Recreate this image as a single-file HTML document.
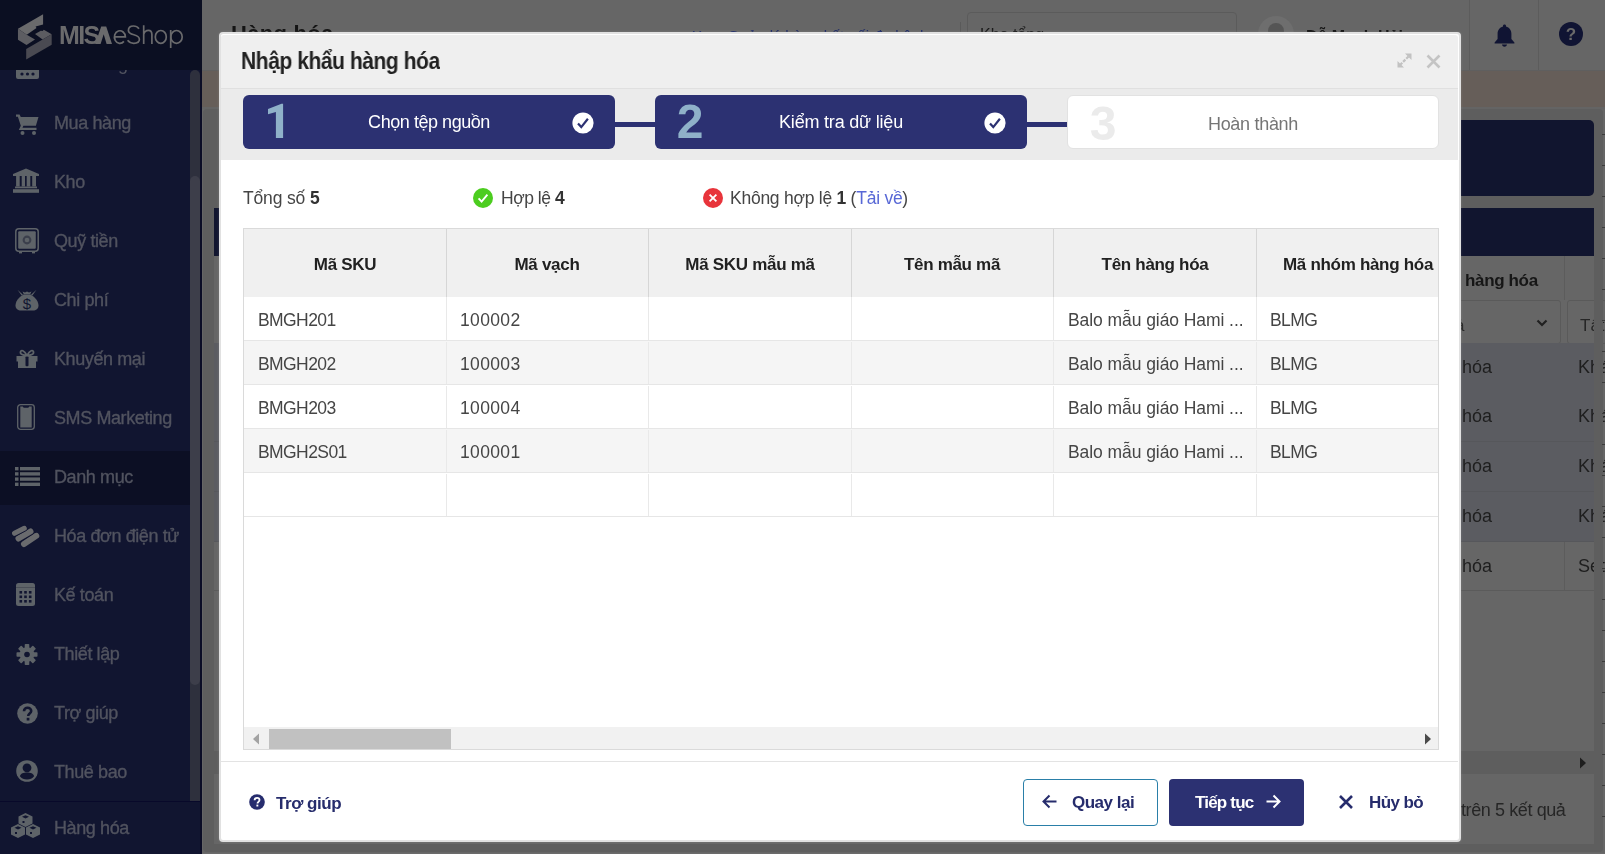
<!DOCTYPE html>
<html><head><meta charset="utf-8">
<style>
*{box-sizing:border-box;margin:0;padding:0}
html,body{width:1605px;height:854px;overflow:hidden;background:#666;font-family:"Liberation Sans",sans-serif;-webkit-font-smoothing:antialiased}
.a{position:absolute}
.t{position:absolute;white-space:nowrap;line-height:1;will-change:transform}
svg{overflow:visible}
</style></head><body>

<div class="a" style="left:202px;top:0px;width:1403px;height:70px;background:#666;"></div>
<div class="t" style="left:231px;top:22.98px;font-size:22px;color:#141414;font-weight:700;letter-spacing:0.3px;">Hàng hóa</div>
<div class="t" style="left:692px;top:28.30px;font-size:15px;color:#1d2a66;letter-spacing:0.2px;">Xem Quản lý hàng kết nối đa kênh</div>
<div class="a" style="left:960px;top:22px;width:1px;height:30px;background:#5a5a5a;"></div>
<div class="a" style="left:967px;top:12px;width:270px;height:46px;border:1px solid #5b5b5b;border-radius:4px"></div>
<div class="t" style="left:980px;top:27.06px;font-size:16px;color:#1a1a1a;">Kho tổng</div>
<div class="a" style="left:1258px;top:16px;width:36px;height:36px;border-radius:50%;background:#6e6e6e"></div>
<div class="a" style="left:1268px;top:23px;width:16px;height:16px;border-radius:50%;background:#555"></div>
<div class="t" style="left:1306px;top:29.46px;font-size:16px;color:#141414;font-weight:700;">Đỗ Mạnh Hải</div>
<div class="a" style="left:1469px;top:0px;width:1px;height:70px;background:#5c5c5c;"></div>
<div class="a" style="left:1538px;top:0px;width:1px;height:70px;background:#5c5c5c;"></div>
<svg class="a" style="left:1493px;top:22px" width="23" height="26" viewBox="0 0 23 26"><path d="M11.5 2.5c-.9 0-1.5.6-1.5 1.4v.6C6.6 5.4 4.6 8.3 4.6 11.7v5.4L1.6 20.6v.9h19.8v-.9l-3-3.5v-5.4c0-3.4-2-6.3-5.4-7.2v-.6c0-.8-.6-1.4-1.5-1.4zM9 22.5c0 1.2 1.1 2.3 2.5 2.3S14 23.7 14 22.5z" fill="#101433"/></svg>
<div class="a" style="left:1559px;top:22px;width:24px;height:24px;border-radius:50%;background:#101433"></div>
<div class="t" style="left:1271px;width:600px;text-align:center;top:26.11px;font-size:17px;color:#6a6a6a;font-weight:700;">?</div>
<div class="a" style="left:202px;top:70px;width:1403px;height:1px;background:#5f5f5f;"></div>
<div class="a" style="left:202px;top:71px;width:1403px;height:36px;background:#665e59;"></div>
<div class="a" style="left:202px;top:107px;width:1403px;height:2px;background:#646464;"></div>
<div class="a" style="left:202px;top:109px;width:1403px;height:745px;background:#666;"></div>
<div class="a" style="left:203px;top:109px;width:1400px;height:743px;background:#5e5e5e;border-radius:4px"></div>
<div class="a" style="left:214px;top:208px;width:1380px;height:636px;background:#666;"></div>
<div class="a" style="left:240px;top:120px;width:1354px;height:76px;background:#11152f;border-radius:5px"></div>
<div class="a" style="left:214px;top:208px;width:1380px;height:48px;background:#11152f;"></div>
<div class="t" style="left:1465px;top:271.81px;font-size:17px;color:#161616;font-weight:700;letter-spacing:-0.35px;">hàng hóa</div>
<div class="a" style="left:1564px;top:256px;width:1px;height:44px;background:#5c5c5c;"></div>
<div class="a" style="left:1300px;top:300px;width:261px;height:44px;border:1px solid #5a5a5a;border-radius:3px"></div>
<svg class="a" style="left:1536px;top:319px" width="12" height="8" viewBox="0 0 12 8"><path d="M1.5 1.5L6 6l4.5-4.5" stroke="#202020" stroke-width="2.2" fill="none"/></svg>
<div class="a" style="left:1567px;top:300px;width:40px;height:44px;border:1px solid #5a5a5a;border-radius:3px"></div>
<div class="t" style="left:1580px;top:316.61px;font-size:17px;color:#262626;">Tất cả</div>
<div class="t" style="left:1455px;top:316.61px;font-size:17px;color:#262626;">ả</div>
<div class="a" style="left:214px;top:343px;width:1380px;height:50px;background:#5b5c61;"></div>
<div class="t" style="left:1462px;top:357.76px;font-size:18px;color:#1e1e1e;">hóa</div>
<div class="t" style="left:1578px;top:357.76px;font-size:18px;color:#1e1e1e;">Khác</div>
<div class="a" style="left:214px;top:392px;width:1380px;height:1px;background:#56575b;"></div>
<div class="a" style="left:214px;top:392px;width:1380px;height:50px;background:#5b5c61;"></div>
<div class="t" style="left:1462px;top:406.76px;font-size:18px;color:#1e1e1e;">hóa</div>
<div class="t" style="left:1578px;top:406.76px;font-size:18px;color:#1e1e1e;">Khác</div>
<div class="a" style="left:214px;top:441px;width:1380px;height:1px;background:#56575b;"></div>
<div class="a" style="left:214px;top:442px;width:1380px;height:50px;background:#5b5c61;"></div>
<div class="t" style="left:1462px;top:456.76px;font-size:18px;color:#1e1e1e;">hóa</div>
<div class="t" style="left:1578px;top:456.76px;font-size:18px;color:#1e1e1e;">Khác</div>
<div class="a" style="left:214px;top:491px;width:1380px;height:1px;background:#56575b;"></div>
<div class="a" style="left:214px;top:492px;width:1380px;height:50px;background:#5b5c61;"></div>
<div class="t" style="left:1462px;top:506.76px;font-size:18px;color:#1e1e1e;">hóa</div>
<div class="t" style="left:1578px;top:506.76px;font-size:18px;color:#1e1e1e;">Khác</div>
<div class="a" style="left:214px;top:541px;width:1380px;height:1px;background:#56575b;"></div>
<div class="t" style="left:1462px;top:556.76px;font-size:18px;color:#1e1e1e;">hóa</div>
<div class="t" style="left:1578px;top:556.76px;font-size:18px;color:#1e1e1e;">Set</div>
<div class="a" style="left:1564px;top:542px;width:1px;height:48px;background:#5c5c5c;"></div>
<div class="a" style="left:214px;top:590px;width:1380px;height:1px;background:#5b5b5b;"></div>
<div class="a" style="left:214px;top:751px;width:1380px;height:23px;background:#5e5e5e;"></div>
<svg class="a" style="left:1579px;top:757px" width="8" height="12" viewBox="0 0 8 12"><path d="M1 0.5L7 6 1 11.5z" fill="#1e1e1e"/></svg>
<div class="t" style="left:1460.5px;top:800.76px;font-size:18px;color:#262626;letter-spacing:-0.4px;">trên 5 kết quả</div>
<div class="a" style="left:1594px;top:208px;width:9px;height:636px;background:#5e5e5e;"></div>
<div class="a" style="left:1602px;top:134px;width:3px;height:1px;background:#3c3c3c;"></div>
<div class="a" style="left:1602px;top:165px;width:3px;height:1px;background:#3c3c3c;"></div>
<div class="a" style="left:1602px;top:196px;width:3px;height:1px;background:#3c3c3c;"></div>
<div class="a" style="left:1602px;top:227px;width:3px;height:1px;background:#3c3c3c;"></div>
<div class="a" style="left:1602px;top:258px;width:3px;height:1px;background:#3c3c3c;"></div>
<div class="a" style="left:1602px;top:289px;width:3px;height:1px;background:#3c3c3c;"></div>
<div class="a" style="left:1602px;top:320px;width:3px;height:1px;background:#3c3c3c;"></div>
<div class="a" style="left:1602px;top:351px;width:3px;height:1px;background:#3c3c3c;"></div>
<div class="a" style="left:1602px;top:382px;width:3px;height:1px;background:#3c3c3c;"></div>
<div class="a" style="left:1602px;top:413px;width:3px;height:1px;background:#3c3c3c;"></div>
<div class="a" style="left:1602px;top:444px;width:3px;height:1px;background:#3c3c3c;"></div>
<div class="a" style="left:1602px;top:475px;width:3px;height:1px;background:#3c3c3c;"></div>
<div class="a" style="left:1602px;top:506px;width:3px;height:1px;background:#3c3c3c;"></div>
<div class="a" style="left:1602px;top:537px;width:3px;height:1px;background:#3c3c3c;"></div>
<div class="a" style="left:1602px;top:568px;width:3px;height:1px;background:#3c3c3c;"></div>
<div class="a" style="left:1602px;top:599px;width:3px;height:1px;background:#3c3c3c;"></div>
<div class="a" style="left:1602px;top:630px;width:3px;height:1px;background:#3c3c3c;"></div>
<div class="a" style="left:1602px;top:661px;width:3px;height:1px;background:#3c3c3c;"></div>
<div class="a" style="left:1602px;top:692px;width:3px;height:1px;background:#3c3c3c;"></div>
<div class="a" style="left:1602px;top:723px;width:3px;height:1px;background:#3c3c3c;"></div>
<div class="a" style="left:1602px;top:754px;width:3px;height:1px;background:#3c3c3c;"></div>
<div class="a" style="left:1602px;top:785px;width:3px;height:1px;background:#3c3c3c;"></div>
<div class="a" style="left:1602px;top:816px;width:3px;height:1px;background:#3c3c3c;"></div>
<div class="a" style="left:202px;top:853px;width:1403px;height:1px;background:#6b6b6b;"></div>
<div class="a" style="left:0px;top:853px;width:202px;height:1px;background:#2a3a33;"></div>
<div class="a" style="left:0px;top:0px;width:202px;height:854px;background:#111530;"></div>
<div class="a" style="left:0px;top:451px;width:190px;height:54px;background:#0c0f24;"></div>
<div class="a" style="left:0px;top:801px;width:202px;height:1px;background:#08092a;"></div>
<svg class="a" style="left:16px;top:55px" width="23" height="24" viewBox="0 0 23 24"><rect x="0" y="0" width="23" height="24" rx="2" fill="#5e6368"/><circle cx="6" cy="19" r="1.6" fill="#111530"/><circle cx="11.5" cy="19" r="1.6" fill="#111530"/><circle cx="17" cy="19" r="1.6" fill="#111530"/></svg>
<div class="t" style="left:54px;top:54.76px;font-size:18px;color:#51535f;letter-spacing:-0.45px;">Bán hàng</div>
<div class="t" style="left:54px;top:113.76px;font-size:18px;color:#51535f;letter-spacing:-0.4px;-webkit-text-stroke:0.35px #51535f;">Mua hàng</div>
<div class="t" style="left:54px;top:172.76px;font-size:18px;color:#51535f;letter-spacing:-0.4px;-webkit-text-stroke:0.35px #51535f;">Kho</div>
<div class="t" style="left:54px;top:231.76px;font-size:18px;color:#51535f;letter-spacing:-0.4px;-webkit-text-stroke:0.35px #51535f;">Quỹ tiền</div>
<div class="t" style="left:54px;top:290.76px;font-size:18px;color:#51535f;letter-spacing:-0.4px;-webkit-text-stroke:0.35px #51535f;">Chi phí</div>
<div class="t" style="left:54px;top:349.76px;font-size:18px;color:#51535f;letter-spacing:-0.4px;-webkit-text-stroke:0.35px #51535f;">Khuyến mại</div>
<div class="t" style="left:54px;top:408.76px;font-size:18px;color:#51535f;letter-spacing:-0.4px;-webkit-text-stroke:0.35px #51535f;">SMS Marketing</div>
<div class="t" style="left:54px;top:467.76px;font-size:18px;color:#51535f;letter-spacing:-0.4px;-webkit-text-stroke:0.35px #51535f;">Danh mục</div>
<div class="t" style="left:54px;top:526.76px;font-size:18px;color:#51535f;letter-spacing:-0.4px;-webkit-text-stroke:0.35px #51535f;">Hóa đơn điện tử</div>
<div class="t" style="left:54px;top:585.76px;font-size:18px;color:#51535f;letter-spacing:-0.4px;-webkit-text-stroke:0.35px #51535f;">Kế toán</div>
<div class="t" style="left:54px;top:644.76px;font-size:18px;color:#51535f;letter-spacing:-0.4px;-webkit-text-stroke:0.35px #51535f;">Thiết lập</div>
<div class="t" style="left:54px;top:703.76px;font-size:18px;color:#51535f;letter-spacing:-0.4px;-webkit-text-stroke:0.35px #51535f;">Trợ giúp</div>
<div class="t" style="left:54px;top:762.76px;font-size:18px;color:#51535f;letter-spacing:-0.4px;-webkit-text-stroke:0.35px #51535f;">Thuê bao</div>
<div class="t" style="left:54px;top:818.76px;font-size:18px;color:#51535f;letter-spacing:-0.4px;-webkit-text-stroke:0.35px #51535f;">Hàng hóa</div>
<svg class="a" style="left:16px;top:114px" width="23" height="21" viewBox="0 0 23 21"><path d="M0 0.5h3.6l1.2 2.6h17.7l-2.6 8.6H7.4l-0.9 2h14v2.3H2.8l2-4.3L1.9 2.8H0z" fill="#5e6368"/><circle cx="6.5" cy="19" r="2" fill="#5e6368"/><circle cx="18" cy="19" r="2" fill="#5e6368"/></svg>
<svg class="a" style="left:13px;top:168px" width="26" height="25" viewBox="0 0 26 25"><path d="M13 0.5L0 6V8h26V6z" fill="#5e6368"/><rect x="3.1" y="8" width="3.6" height="10.5" fill="#5e6368"/><rect x="8.7" y="8" width="3.3" height="10.5" fill="#5e6368"/><rect x="13.7" y="8" width="3.6" height="10.5" fill="#5e6368"/><rect x="19.2" y="8" width="3.8" height="10.5" fill="#5e6368"/><rect x="2" y="18.5" width="22" height="1.8" fill="#5e6368"/><rect x="0" y="21.2" width="26" height="3.6" fill="#5e6368"/></svg>
<svg class="a" style="left:15px;top:228px" width="24" height="26" viewBox="0 0 24 26"><rect x="0.8" y="0.8" width="22.4" height="22.4" rx="3" fill="none" stroke="#5e6368" stroke-width="1.5"/><rect x="3.2" y="3.2" width="17.6" height="17.6" rx="1" fill="#5e6368"/><circle cx="12" cy="12" r="4.4" fill="#3b3f4c"/><circle cx="12" cy="12" r="2.3" fill="#5e6368"/><rect x="4" y="23.6" width="3" height="1.8" fill="#5e6368"/><rect x="17" y="23.6" width="3" height="1.8" fill="#5e6368"/></svg>
<svg class="a" style="left:15px;top:289px" width="24" height="22" viewBox="0 0 24 22"><path d="M8.5 5.5C3 8.5 0.5 13 0.5 16.5 0.5 20 3 21.5 6 21.5h12c3 0 5.5-1.5 5.5-5C23.5 13 21 8.5 15.5 5.5z" fill="#5e6368"/><path d="M7.5 2.5L8.8 5.2H15.2L16.5 2.5 14 3.6 12 2.6 10 3.6z" fill="#5e6368"/><path d="M2.5 0.8L8 5.8 6.6 6.6zM21.5 0.8L16 5.8 17.4 6.6z" fill="#5e6368"/><text x="12" y="19.5" font-size="15" font-family="Liberation Sans" text-anchor="middle" fill="#111530">$</text></svg>
<svg class="a" style="left:16px;top:349px" width="22" height="19" viewBox="0 0 22 19"><path d="M0.5 7h21v5.5h-1.5v6.5H2v-6.5H0.5z" fill="#5e6368"/><rect x="9.5" y="7.2" width="3" height="10" rx="1" fill="#111530"/><path d="M11 6.5C8 1 5 0.5 4.5 3 4 5.5 8 6.5 11 6.5zM11 6.5c3-5.5 6-6 6.5-3.5 0.5 2.5-3.5 3.5-6.5 3.5z" fill="none" stroke="#5e6368" stroke-width="1.8"/></svg>
<svg class="a" style="left:17px;top:404px" width="18" height="26" viewBox="0 0 18 26"><rect x="0.7" y="0.7" width="16.6" height="24.6" rx="2.8" fill="none" stroke="#5e6368" stroke-width="1.3"/><path d="M3.3 2.4H5.8C6.2 3.4 6.8 3.8 7.6 3.8H10.4C11.2 3.8 11.8 3.4 12.2 2.4H14.7V23.6H3.3z" fill="#5e6368"/></svg>
<svg class="a" style="left:15px;top:467px" width="25" height="19" viewBox="0 0 25 19"><g fill="#5e6368"><rect x="0" y="0" width="3.5" height="3.4"/><rect x="5" y="0" width="20" height="3.4"/><rect x="0" y="5.2" width="3.5" height="3.4"/><rect x="5" y="5.2" width="20" height="3.4"/><rect x="0" y="10.4" width="3.5" height="3.4"/><rect x="5" y="10.4" width="20" height="3.4"/><rect x="0" y="15.6" width="3.5" height="3.4"/><rect x="5" y="15.6" width="20" height="3.4"/></g></svg>
<svg class="a" style="left:12px;top:526px" width="27" height="22" viewBox="0 0 27 22"><g fill="none" stroke-linecap="round"><path d="M12 18L24.3 9.8" stroke="#6a6b6e" stroke-width="6"/><path d="M6.5 12.5L18.5 5.5" stroke="#111530" stroke-width="7.4"/><path d="M6.5 12.5L18.5 5.5" stroke="#6a6b6e" stroke-width="6"/><path d="M2.5 7.3L12.3 2.3" stroke="#111530" stroke-width="6.4"/><path d="M2.5 7.3L12.3 2.3" stroke="#6a6b6e" stroke-width="5"/></g></svg>
<svg class="a" style="left:16px;top:583px" width="19" height="23" viewBox="0 0 19 23"><rect x="0" y="0" width="19" height="23" rx="2.5" fill="#5e6368"/><rect x="0" y="4" width="19" height="1" fill="#4a4e57"/><g fill="#111530"><rect x="3.5" y="8" width="2.6" height="2.6"/><rect x="8.2" y="8" width="2.6" height="2.6"/><rect x="12.9" y="8" width="2.6" height="2.6"/><rect x="3.5" y="12.5" width="2.6" height="2.6"/><rect x="8.2" y="12.5" width="2.6" height="2.6"/><rect x="12.9" y="12.5" width="2.6" height="2.6"/><rect x="3.5" y="17" width="2.6" height="2.6"/><rect x="8.2" y="17" width="2.6" height="2.6"/><rect x="12.9" y="17" width="2.6" height="2.6"/></g></svg>
<svg class="a" style="left:16px;top:644px" width="22" height="21" viewBox="0 0 22 21"><g transform="translate(11 10.5)"><circle r="7.3" fill="#5e6368"/><rect x="-2.3" y="-10.5" width="4.6" height="5" rx="0.8" fill="#5e6368" transform="rotate(0)"/><rect x="-2.3" y="-10.5" width="4.6" height="5" rx="0.8" fill="#5e6368" transform="rotate(45)"/><rect x="-2.3" y="-10.5" width="4.6" height="5" rx="0.8" fill="#5e6368" transform="rotate(90)"/><rect x="-2.3" y="-10.5" width="4.6" height="5" rx="0.8" fill="#5e6368" transform="rotate(135)"/><rect x="-2.3" y="-10.5" width="4.6" height="5" rx="0.8" fill="#5e6368" transform="rotate(180)"/><rect x="-2.3" y="-10.5" width="4.6" height="5" rx="0.8" fill="#5e6368" transform="rotate(225)"/><rect x="-2.3" y="-10.5" width="4.6" height="5" rx="0.8" fill="#5e6368" transform="rotate(270)"/><rect x="-2.3" y="-10.5" width="4.6" height="5" rx="0.8" fill="#5e6368" transform="rotate(315)"/><circle r="2.8" fill="#111530"/></g></svg>
<svg class="a" style="left:17px;top:703px" width="21" height="21" viewBox="0 0 21 21"><circle cx="10.5" cy="10.5" r="10.3" fill="#5e6368"/><path d="M7 8.2c0-2 1.6-3.4 3.6-3.4 2 0 3.6 1.3 3.6 3.2 0 2.6-3 2.6-3 5" fill="none" stroke="#111530" stroke-width="2.6"/><rect x="9.7" y="14.8" width="2.7" height="2.7" fill="#111530"/></svg>
<svg class="a" style="left:16px;top:760px" width="22" height="22" viewBox="0 0 22 22"><circle cx="11" cy="11" r="10.8" fill="#5e6368"/><circle cx="11" cy="7.8" r="4.4" fill="#111530"/><path d="M3.9 16.3C4.6 13.3 7.5 12.4 11 12.4S17.4 13.3 18.1 16.3C16.4 18.6 13.9 19.6 11 19.6S5.6 18.6 3.9 16.3z" fill="#111530"/><circle cx="11" cy="7.8" r="2.4" fill="none" stroke="#5e6368" stroke-width="0" /></svg>
<svg class="a" style="left:11px;top:813px" width="29" height="25" viewBox="0 0 29 25"><g fill="#5e6368"><path d="M14.5 0l7 3.5v7l-7 3.5-7-3.5v-7z"/><path d="M7 11l7 3.5v7L7 25 0 21.5v-7z"/><path d="M22 11l7 3.5v7L22 25l-7-3.5v-7z"/></g><g fill="#111530"><path d="M14.5 2.2l3.5 1.6-3.5 1.7-3.5-1.7z"/><path d="M7 13.2l3.5 1.6L7 16.5 3.5 14.8z"/><path d="M22 13.2l3.5 1.6-3.5 1.7-3.5-1.7z"/><rect x="4" y="19" width="2" height="2"/><rect x="19" y="19" width="2" height="2"/><rect x="11.5" y="8" width="2" height="2"/></g></svg>
<div class="a" style="left:190px;top:70px;width:10px;height:731px;background:#2e303d;border-radius:5px 5px 0 0"></div>
<div class="a" style="left:190px;top:176px;width:10px;height:509px;background:#3d3e4a;border-radius:5px"></div>
<div class="a" style="left:200px;top:0px;width:2px;height:854px;background:#0b0d26;"></div>
<div class="a" style="left:0px;top:0px;width:202px;height:70px;background:#0b0f22;"></div>
<svg class="a" style="left:14px;top:10px" width="42" height="52" viewBox="0 0 42 52"><path d="M3.96 18.87L29.09 4.26V14.61L21.6 16.4L22.5 17.96L12.78 24.65z" fill="#6a6a6c"/><path d="M3.96 18.87L12.78 24.65L21 29.5L12.5 35L3.96 29.8z" fill="#5d5d62"/><path d="M21 24L26.8 20.7L28.6 21L29.8 19.8L37.7 24.3L28.6 29.5z" fill="#5c5c61"/><path d="M12.2 39L28.6 29.5L37.7 24.3V34.7L12.2 49.6z" fill="#4a4a52"/></svg>
<div class="t" style="left:58.5px;top:22.84px;font-size:25px;color:#6a6a6c;font-weight:700;letter-spacing:-1.6px;">MIS</div>
<svg class="a" style="left:0px;top:0px" width="202" height="70" viewBox="0 0 202 70"><path d="M95.2 43.9L101.2 26.5H106.2L112 43.9H106.6L103.7 34.2L100.6 43.9z" fill="#6a6a6c"/><g fill="none" stroke="#6a6a6c" stroke-width="1.7"><path d="M114.6 36.9H125.4A5.5 6.3 0 1 0 123.9 41.4"/><path d="M139 28.7C137.6 26.8 135.4 26 133.5 26C130.3 26 128.4 27.9 128.4 30.4C128.4 36.2 139.4 33.4 139.4 39.3C139.4 42 137 43.3 133.8 43.3C131.2 43.3 129 42.1 127.6 40.3"/><path d="M143.7 25.2V44M143.7 34.2C144.5 31.6 146.4 30.3 148.4 30.3C150.9 30.3 151.9 31.8 151.9 34.6V44"/><ellipse cx="160.8" cy="36.9" rx="5.5" ry="6.4"/><path d="M170.7 30V48"/><ellipse cx="176.5" cy="36.9" rx="5.7" ry="6.4"/></g></svg>
<div class="a" style="left:219px;top:32px;width:1242px;height:810px;background:#fff;border:2px solid #e1e1e1;border-radius:4px;box-shadow:0 0 3px rgba(255,255,255,.15)"></div>
<div class="a" style="left:221px;top:35px;width:1237px;height:53px;background:#efefef;border-radius:3px 3px 0 0;"></div>
<div class="a" style="left:221px;top:88px;width:1237px;height:1px;background:#e0e0e0;"></div>
<div class="a" style="left:221px;top:89px;width:1237px;height:71px;background:#ebebeb;"></div>
<div class="t" style="left:241px;top:49.53px;font-size:23px;color:#212121;transform:scaleX(0.915);transform-origin:0 0;font-weight:700;letter-spacing:-0.5px;">Nhập khẩu hàng hóa</div>
<svg class="a" style="left:1397px;top:53px" width="15" height="15" viewBox="0 0 15 15"><g stroke="#c2c2c2" stroke-width="2.2" fill="none"><path d="M3 12L12 3" stroke-dasharray="3.2 1.2"/></g><path d="M8 0.5h6.5V7z" fill="#c2c2c2"/><path d="M0.5 8v6.5H7z" fill="#c2c2c2"/></svg>
<svg class="a" style="left:1426px;top:54px" width="15" height="15" viewBox="0 0 15 15"><path d="M1.5 1.5l12 12M13.5 1.5l-12 12" stroke="#c4c4c4" stroke-width="2.6"/></svg>
<div class="a" style="left:243px;top:95px;width:372px;height:54px;background:#2c3172;border-radius:6px"></div>
<div class="a" style="left:615px;top:122px;width:40px;height:5px;background:#2c3172;"></div>
<div class="a" style="left:655px;top:95px;width:372px;height:54px;background:#2c3172;border-radius:6px"></div>
<div class="a" style="left:1027px;top:122px;width:40px;height:5px;background:#2c3172;"></div>
<div class="a" style="left:1067px;top:95px;width:372px;height:54px;background:#fff;border:1px solid #e2e2e2;border-radius:6px"></div>
<svg class="a" style="left:260px;top:98px" width="32" height="46" viewBox="0 0 32 46"><path d="M8 11L21.5 5.66H23.1V40.1H15.9V14.1L8 16.3z" fill="#8fb1c9"/></svg>
<div class="t" style="left:390px;width:600px;text-align:center;top:97.87px;font-size:48px;color:#8fb1c9;font-weight:700;">2</div>
<div class="t" style="left:803px;width:600px;text-align:center;top:99.87px;font-size:48px;color:#ebebeb;font-weight:700;">3</div>
<div class="t" style="left:129px;width:600px;text-align:center;top:112.76px;font-size:18px;color:#fff;letter-spacing:-0.45px;font-weight:500;">Chọn tệp nguồn</div>
<div class="t" style="left:541px;width:600px;text-align:center;top:112.76px;font-size:18px;color:#fff;letter-spacing:-0.2px;">Kiểm tra dữ liệu</div>
<div class="t" style="left:953.4000000000001px;width:600px;text-align:center;top:114.76px;font-size:18px;color:#757575;letter-spacing:-0.3px;">Hoàn thành</div>
<svg class="a" style="left:571.5px;top:111.7px" width="22" height="22" viewBox="0 0 22 22"><circle cx="11" cy="11" r="10.6" fill="#fff"/><path d="M6 11.4l3.3 3.7 6.6-8.4" fill="none" stroke="#2c3172" stroke-width="2.2"/></svg>
<svg class="a" style="left:983.5px;top:111.7px" width="22" height="22" viewBox="0 0 22 22"><circle cx="11" cy="11" r="10.6" fill="#fff"/><path d="M6 11.4l3.3 3.7 6.6-8.4" fill="none" stroke="#2c3172" stroke-width="2.2"/></svg>
<div class="t" style="left:243.4px;top:189.99px;font-size:17.5px;color:#454545;letter-spacing:-0.15px;">Tổng số <b style="color:#333">5</b></div>
<svg class="a" style="left:473px;top:188px" width="20" height="20" viewBox="0 0 20 20"><circle cx="10" cy="10" r="10" fill="#4ccd1f"/><path d="M5.6 10.4l3 3.2 5.8-7" fill="none" stroke="#fff" stroke-width="1.9"/></svg>
<div class="t" style="left:500.6px;top:190.19px;font-size:17.5px;color:#454545;letter-spacing:-0.46px;">Hợp lệ <b style="color:#333">4</b></div>
<svg class="a" style="left:703px;top:188px" width="20" height="20" viewBox="0 0 20 20"><circle cx="10" cy="10" r="10" fill="#e8343b"/><path d="M6.6 6.6l6.8 6.8M13.4 6.6l-6.8 6.8" stroke="#fff" stroke-width="1.8"/></svg>
<div class="t" style="left:730px;top:190.19px;font-size:17.5px;color:#454545;letter-spacing:-0.25px;">Không hợp lệ <b style="color:#333">1</b> (<span style="color:#5868d6">Tải về</span>)</div>
<div class="a" style="left:243px;top:228px;width:1196px;height:522px;border:1px solid #dadada;background:#fff"></div>
<div class="a" style="left:244px;top:229px;width:1194px;height:68px;background:#f0f0f0;"></div>
<div class="a" style="left:446px;top:229px;width:1px;height:68px;background:#d6d6d6;"></div>
<div class="a" style="left:648px;top:229px;width:1px;height:68px;background:#d6d6d6;"></div>
<div class="a" style="left:851px;top:229px;width:1px;height:68px;background:#d6d6d6;"></div>
<div class="a" style="left:1053px;top:229px;width:1px;height:68px;background:#d6d6d6;"></div>
<div class="a" style="left:1256px;top:229px;width:1px;height:68px;background:#d6d6d6;"></div>
<div class="t" style="left:44.5px;width:600px;text-align:center;top:255.61px;font-size:17px;color:#212121;font-weight:700;letter-spacing:-0.3px;">Mã SKU</div>
<div class="t" style="left:247.0px;width:600px;text-align:center;top:255.61px;font-size:17px;color:#212121;font-weight:700;letter-spacing:-0.3px;">Mã vạch</div>
<div class="t" style="left:449.5px;width:600px;text-align:center;top:255.61px;font-size:17px;color:#212121;font-weight:700;letter-spacing:-0.3px;">Mã SKU mẫu mã</div>
<div class="t" style="left:652.0px;width:600px;text-align:center;top:255.61px;font-size:17px;color:#212121;font-weight:700;letter-spacing:-0.3px;">Tên mẫu mã</div>
<div class="t" style="left:854.5px;width:600px;text-align:center;top:255.61px;font-size:17px;color:#212121;font-weight:700;letter-spacing:-0.3px;">Tên hàng hóa</div>
<div class="t" style="left:1057.7px;width:600px;text-align:center;top:255.61px;font-size:17px;color:#212121;font-weight:700;letter-spacing:-0.3px;">Mã nhóm hàng hóa</div>
<div class="a" style="left:244px;top:297px;width:1194px;height:43px;background:#fff;"></div>
<div class="a" style="left:244px;top:340px;width:1194px;height:1px;background:#e6e6e6;"></div>
<div class="a" style="left:446px;top:297px;width:1px;height:43px;background:#e9e9e9;"></div>
<div class="a" style="left:648px;top:297px;width:1px;height:43px;background:#e9e9e9;"></div>
<div class="a" style="left:851px;top:297px;width:1px;height:43px;background:#e9e9e9;"></div>
<div class="a" style="left:1053px;top:297px;width:1px;height:43px;background:#e9e9e9;"></div>
<div class="a" style="left:1256px;top:297px;width:1px;height:43px;background:#e9e9e9;"></div>
<div class="t" style="left:257.6px;top:312.04px;font-size:17.5px;color:#454545;letter-spacing:-0.58px;">BMGH201</div>
<div class="t" style="left:460px;top:312.04px;font-size:17.5px;color:#454545;letter-spacing:0.35px;">100002</div>
<div class="t" style="left:1068px;top:312.04px;font-size:17.5px;color:#454545;letter-spacing:-0.07px;">Balo mẫu giáo Hami ...</div>
<div class="t" style="left:1270px;top:312.04px;font-size:17.5px;color:#454545;letter-spacing:-0.6px;">BLMG</div>
<div class="a" style="left:244px;top:341px;width:1194px;height:43px;background:#f5f5f5;"></div>
<div class="a" style="left:244px;top:384px;width:1194px;height:1px;background:#e6e6e6;"></div>
<div class="a" style="left:446px;top:342px;width:1px;height:42px;background:#e9e9e9;"></div>
<div class="a" style="left:648px;top:342px;width:1px;height:42px;background:#e9e9e9;"></div>
<div class="a" style="left:851px;top:342px;width:1px;height:42px;background:#e9e9e9;"></div>
<div class="a" style="left:1053px;top:342px;width:1px;height:42px;background:#e9e9e9;"></div>
<div class="a" style="left:1256px;top:342px;width:1px;height:42px;background:#e9e9e9;"></div>
<div class="t" style="left:257.6px;top:356.04px;font-size:17.5px;color:#454545;letter-spacing:-0.58px;">BMGH202</div>
<div class="t" style="left:460px;top:356.04px;font-size:17.5px;color:#454545;letter-spacing:0.35px;">100003</div>
<div class="t" style="left:1068px;top:356.04px;font-size:17.5px;color:#454545;letter-spacing:-0.07px;">Balo mẫu giáo Hami ...</div>
<div class="t" style="left:1270px;top:356.04px;font-size:17.5px;color:#454545;letter-spacing:-0.6px;">BLMG</div>
<div class="a" style="left:244px;top:385px;width:1194px;height:43px;background:#fff;"></div>
<div class="a" style="left:244px;top:428px;width:1194px;height:1px;background:#e6e6e6;"></div>
<div class="a" style="left:446px;top:386px;width:1px;height:42px;background:#e9e9e9;"></div>
<div class="a" style="left:648px;top:386px;width:1px;height:42px;background:#e9e9e9;"></div>
<div class="a" style="left:851px;top:386px;width:1px;height:42px;background:#e9e9e9;"></div>
<div class="a" style="left:1053px;top:386px;width:1px;height:42px;background:#e9e9e9;"></div>
<div class="a" style="left:1256px;top:386px;width:1px;height:42px;background:#e9e9e9;"></div>
<div class="t" style="left:257.6px;top:400.04px;font-size:17.5px;color:#454545;letter-spacing:-0.58px;">BMGH203</div>
<div class="t" style="left:460px;top:400.04px;font-size:17.5px;color:#454545;letter-spacing:0.35px;">100004</div>
<div class="t" style="left:1068px;top:400.04px;font-size:17.5px;color:#454545;letter-spacing:-0.07px;">Balo mẫu giáo Hami ...</div>
<div class="t" style="left:1270px;top:400.04px;font-size:17.5px;color:#454545;letter-spacing:-0.6px;">BLMG</div>
<div class="a" style="left:244px;top:429px;width:1194px;height:43px;background:#f5f5f5;"></div>
<div class="a" style="left:244px;top:472px;width:1194px;height:1px;background:#e6e6e6;"></div>
<div class="a" style="left:446px;top:430px;width:1px;height:42px;background:#e9e9e9;"></div>
<div class="a" style="left:648px;top:430px;width:1px;height:42px;background:#e9e9e9;"></div>
<div class="a" style="left:851px;top:430px;width:1px;height:42px;background:#e9e9e9;"></div>
<div class="a" style="left:1053px;top:430px;width:1px;height:42px;background:#e9e9e9;"></div>
<div class="a" style="left:1256px;top:430px;width:1px;height:42px;background:#e9e9e9;"></div>
<div class="t" style="left:257.6px;top:444.04px;font-size:17.5px;color:#454545;letter-spacing:-0.58px;">BMGH2S01</div>
<div class="t" style="left:460px;top:444.04px;font-size:17.5px;color:#454545;letter-spacing:0.35px;">100001</div>
<div class="t" style="left:1068px;top:444.04px;font-size:17.5px;color:#454545;letter-spacing:-0.07px;">Balo mẫu giáo Hami ...</div>
<div class="t" style="left:1270px;top:444.04px;font-size:17.5px;color:#454545;letter-spacing:-0.6px;">BLMG</div>
<div class="a" style="left:244px;top:473px;width:1194px;height:43px;background:#fff;"></div>
<div class="a" style="left:244px;top:516px;width:1194px;height:1px;background:#e6e6e6;"></div>
<div class="a" style="left:446px;top:474px;width:1px;height:42px;background:#e9e9e9;"></div>
<div class="a" style="left:648px;top:474px;width:1px;height:42px;background:#e9e9e9;"></div>
<div class="a" style="left:851px;top:474px;width:1px;height:42px;background:#e9e9e9;"></div>
<div class="a" style="left:1053px;top:474px;width:1px;height:42px;background:#e9e9e9;"></div>
<div class="a" style="left:1256px;top:474px;width:1px;height:42px;background:#e9e9e9;"></div>
<div class="a" style="left:244px;top:727px;width:1194px;height:22px;background:#f1f1f1;"></div>
<div class="a" style="left:269px;top:729px;width:182px;height:20px;background:#c1c1c1;"></div>
<svg class="a" style="left:252px;top:733px" width="8" height="12" viewBox="0 0 8 12"><path d="M7 0.5L1 6l6 5.5z" fill="#a3a3a3"/></svg>
<svg class="a" style="left:1424px;top:733px" width="8" height="12" viewBox="0 0 8 12"><path d="M1 0.5L7 6l-6 5.5z" fill="#4a4a4a"/></svg>
<div class="a" style="left:221px;top:761px;width:1237px;height:1px;background:#e3e3e3;"></div>
<svg class="a" style="left:249px;top:794px" width="16" height="16" viewBox="0 0 16 16"><circle cx="8" cy="8" r="7.8" fill="#262c6e"/><path d="M5.6 6.3c0-1.5 1.1-2.4 2.5-2.4 1.4 0 2.4.9 2.4 2.1 0 1.8-2 1.8-2 3.4" fill="none" stroke="#fff" stroke-width="1.8"/><rect x="7.4" y="10.6" width="1.9" height="1.9" fill="#fff"/></svg>
<div class="t" style="left:276.3px;top:794.61px;font-size:17px;color:#262c6c;font-weight:700;letter-spacing:-0.45px;">Trợ giúp</div>
<div class="a" style="left:1023px;top:779px;width:135px;height:47px;border:1px solid #2a7fa8;border-radius:4px;background:#fff"></div>
<svg class="a" style="left:1041.5px;top:794px" width="15" height="15" viewBox="0 0 15 15"><path d="M14.5 7.5H2M7.5 1.5L1.5 7.5l6 6" fill="none" stroke="#262c6c" stroke-width="2"/></svg>
<div class="t" style="left:1071.7px;top:794.01px;font-size:17px;color:#262c6c;font-weight:700;letter-spacing:-0.5px;">Quay lại</div>
<div class="a" style="left:1169px;top:779px;width:135px;height:47px;background:#2c3172;border-radius:4px"></div>
<div class="t" style="left:1195px;top:794.01px;font-size:17px;color:#fff;font-weight:700;letter-spacing:-0.8px;">Tiếp tục</div>
<svg class="a" style="left:1266px;top:794px" width="15" height="15" viewBox="0 0 15 15"><path d="M0.5 7.5H13M7.5 1.5l6 6-6 6" fill="none" stroke="#fff" stroke-width="2"/></svg>
<svg class="a" style="left:1339px;top:795px" width="14" height="14" viewBox="0 0 14 14"><path d="M1 1l12 12M13 1L1 13" stroke="#262c6c" stroke-width="2.6"/></svg>
<div class="t" style="left:1368.5px;top:794.01px;font-size:17px;color:#262c6c;font-weight:700;letter-spacing:-0.6px;">Hủy bỏ</div>
</body></html>
